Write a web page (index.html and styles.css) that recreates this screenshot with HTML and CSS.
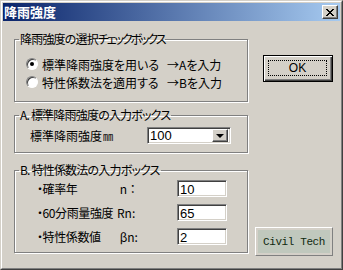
FILE: index.html
```html
<!DOCTYPE html>
<html lang="ja">
<head>
  <meta charset="UTF-8">
  <title>降雨強度</title>
  <link rel="stylesheet" href="styles.css">
</head>
<body>

<div class="window">
  <div class="frame">
    <div class="titlebar">
      <span class="title">降雨強度</span>
      <span class="close-btn">
        <svg width="8" height="7" viewBox="0 0 8 7"><path d="M0 0L7 7M1 0L8 7M7 0L0 7M8 0L1 7" stroke="#000" stroke-width="1" fill="none"/></svg>
      </span>
    </div>

    <div class="content">
      <div class="left">
        <fieldset class="group group-select">
          <legend>降雨強度の選択<span class="kana">チェックボックス</span></legend>
          <div class="radio-row">
            <span class="radio checked"></span>
            <span class="radio-label">標準降雨強度を用いる</span>
            <span>→Aを入力</span>
          </div>
          <div class="radio-row">
            <span class="radio"></span>
            <span class="radio-label">特性係数法を適用する</span>
            <span>→Bを入力</span>
          </div>
        </fieldset>

        <fieldset class="group group-a">
          <legend>A. 標準降雨強度の入力ボックス</legend>
          <div class="combo-row">
            <span class="combo-label">標準降雨強度<span class="unit">㎜</span></span>
            <div class="combo">
              <span class="combo-value">100</span>
              <span class="combo-btn"><span class="arrow"></span></span>
            </div>
          </div>
        </fieldset>

        <fieldset class="group group-b">
          <legend>B. 特性係数法の入力ボックス</legend>
          <div class="field-row">
            <span class="field-name">・確率年</span>
            <span class="field-sym">&nbsp;n ：</span>
            <span class="textbox">10</span>
          </div>
          <div class="field-row">
            <span class="field-name">・60分雨量強度</span>
            <span class="field-sym">Rn:</span>
            <span class="textbox">65</span>
          </div>
          <div class="field-row">
            <span class="field-name">・特性係数値</span>
            <span class="field-sym">&nbsp;βn:</span>
            <span class="textbox">2</span>
          </div>
        </fieldset>
      </div>

      <div class="right">
        <button class="ok-btn"><span class="focus">OK</span></button>
        <div class="brand"><span>Civil Tech</span></div>
      </div>
    </div>
  </div>
</div>

</body>
</html>
```

FILE: styles.css
```css
body {
  margin: 0;
  background: #d4d0c8;
  font-family: "Noto Sans CJK JP", sans-serif;
  font-size: 12px;
  font-feature-settings: "palt" 1;
  color: #000;
}

.window {
  width: 343px;
  height: 270px;
  box-sizing: border-box;
  border: 1px solid;
  border-color: #d4d0c8 #404040 #404040 #d4d0c8;
  background: #d4d0c8;
  display: flex;
  overflow: hidden;
}

.frame {
  flex: 1;
  border: 1px solid;
  border-color: #fff #808080 #808080 #fff;
  padding: 1px;
  display: flex;
  flex-direction: column;
  min-height: 0;
}

.titlebar {
  height: 18px;
  flex: none;
  background: linear-gradient(to right, #0a246a, #a6caf0);
  display: flex;
  align-items: center;
  justify-content: space-between;
  padding: 0 2px 0 1px;
}

.title {
  color: #fff;
  font-weight: bold;
  font-size: 13px;
  line-height: 18px;
}

.close-btn {
  width: 16px;
  height: 14px;
  box-sizing: border-box;
  background: #d4d0c8;
  border: 1px solid;
  border-color: #fff #404040 #404040 #fff;
  box-shadow: inset -1px -1px #808080;
  display: flex;
  align-items: center;
  justify-content: center;
}

.content {
  flex: 1;
  min-height: 0;
  display: flex;
  padding: 10px 7px 11px 11px;
}

.left {
  width: 234px;
  flex: none;
}

.group {
  margin: 0;
  padding: 0;
  border: 1px solid #808080;
  box-shadow: inset 1px 1px #fff, 1px 1px #fff;
  min-width: 0;
}

.group legend {
  margin-left: 4px;
  padding: 0 1px;
  line-height: 16px;
  height: 16px;
  letter-spacing: -0.8px;
}

.group legend .kana {
  letter-spacing: -2.1px;
}

.group-select {
  padding: 8px 0 10px 0;
}

.radio-row {
  display: flex;
  align-items: center;
  height: 18px;
  padding-left: 11px;
}

.radio {
  width: 12px;
  height: 12px;
  flex: none;
  box-sizing: border-box;
  border-radius: 50%;
  background: #fff;
  border: 1px solid;
  border-color: #808080 #fff #fff #808080;
  box-shadow: inset 1px 1px #404040;
  margin-right: 4px;
  display: flex;
  align-items: center;
  justify-content: center;
}

.radio.checked::after {
  content: "";
  width: 4px;
  height: 4px;
  border-radius: 50%;
  background: #000;
}

.radio-label {
  width: 125px;
  min-width: 0;
  flex: none;
}

.group-a {
  margin-top: 5px;
  padding: 4px 0 8px 0;
}

.combo-row {
  display: flex;
  align-items: center;
  height: 17px;
  padding-left: 15px;
}

.combo-label {
  width: 117px;
  min-width: 0;
  flex: none;
  white-space: nowrap;
}

.unit {
  display: inline-block;
  width: 11px;
  margin-left: 1px;
  transform: scaleX(0.85);
  transform-origin: left center;
}

.combo {
  width: 84px;
  height: 17px;
  box-sizing: border-box;
  background: #fff;
  border: 1px solid;
  border-color: #808080 #fff #fff #808080;
  box-shadow: inset 1px 1px #404040, inset -1px -1px #d4d0c8;
  display: flex;
  align-items: center;
  justify-content: space-between;
  padding: 2px;
}

.combo-value,
.textbox {
  font-family: "Liberation Sans", sans-serif;
  font-size: 13px;
  line-height: 13px;
}

.combo-btn {
  width: 16px;
  height: 13px;
  box-sizing: border-box;
  background: #d4d0c8;
  border: 1px solid;
  border-color: #fff #404040 #404040 #fff;
  box-shadow: inset -1px -1px #808080;
  display: flex;
  align-items: center;
  justify-content: center;
}

.arrow {
  width: 0;
  height: 0;
  border-left: 4px solid transparent;
  border-right: 4px solid transparent;
  border-top: 4px solid #000;
  margin-top: 1px;
}

.group-b {
  margin-top: 9px;
  padding: 2px 0 7px 0;
}

.field-row {
  display: flex;
  align-items: center;
  height: 17px;
  margin-bottom: 7px;
  padding-left: 22px;
  white-space: nowrap;
}

.field-row:last-child {
  margin-bottom: 0;
}

.field-name {
  width: 80px;
  min-width: 0;
  flex: none;
  letter-spacing: -0.4px;
}

.field-sym {
  width: 60px;
  min-width: 0;
  flex: none;
}

.textbox {
  width: 50px;
  height: 17px;
  flex: none;
  box-sizing: border-box;
  background: #fff;
  border: 1px solid;
  border-color: #808080 #fff #fff #808080;
  box-shadow: inset 1px 1px #404040, inset -1px -1px #d4d0c8;
  padding: 2px 2px 0;
}

.right {
  width: 78px;
  flex: none;
  margin-left: auto;
  display: flex;
  flex-direction: column;
  align-items: flex-end;
}

.ok-btn {
  margin-top: 24px;
  width: 70px;
  height: 27px;
  box-sizing: border-box;
  padding: 3px;
  background: #d4d0c8;
  border: 1px solid #000;
  box-shadow: inset 1px 1px #fff, inset -1px -1px #404040, inset -2px -2px #808080;
  font-family: "Liberation Sans", sans-serif;
  font-size: 12px;
  display: flex;
}

.focus {
  flex: 1;
  border: 1px dotted #000;
  margin: 1px 2px 2px 1px;
  display: flex;
  align-items: center;
  justify-content: center;
}

.brand {
  margin-top: auto;
  width: 78px;
  height: 29px;
  box-sizing: border-box;
  border: 1px solid;
  border-color: #fff #808080 #808080 #fff;
  padding: 2px;
  display: flex;
}

.brand span {
  flex: 1;
  background: #c0c8bd;
  color: #102810;
  font-family: "Liberation Mono", monospace;
  font-size: 11px;
  letter-spacing: -0.4px;
  display: flex;
  align-items: center;
  justify-content: center;
}
```
